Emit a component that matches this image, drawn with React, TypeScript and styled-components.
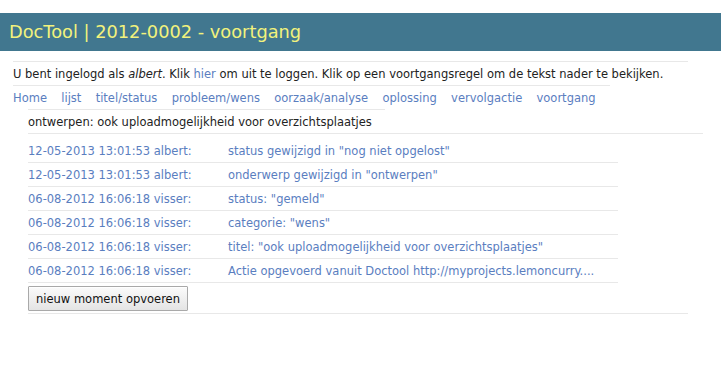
import React from "react";
import styled, { createGlobalStyle } from "styled-components";

const Global = createGlobalStyle`
  html, body { margin: 0; padding: 0; background: #fff; }
  body { font-family: "DejaVu Sans", Verdana, sans-serif; font-size: 11.5px; color: #222; }
`;

const Page = styled.div`
  padding-top: 13px;
`;

const Header = styled.header`
  height: 38px;
  background: #41778f;
  color: #f2f27c;
  font-size: 17.8px;
  line-height: 38px;
  padding-left: 9px;
  white-space: nowrap;
`;

const Content = styled.div`
  margin: 10px 0 0 13px;
  display: flex;
  flex-direction: column;
  align-items: flex-start;
`;

const Rule = styled.div<{ $w: number; $indent?: number }>`
  width: ${(p) => p.$w}px;
  margin-left: ${(p) => p.$indent ?? 0}px;
  height: 0;
  border-top: 1px solid #e8e8e8;
`;

const Info = styled.p`
  margin: 0;
  width: 597px;
  height: 21px;
  padding-top: 2px;
  line-height: 21px;
  border-bottom: 1px solid #e8e8e8;
  white-space: nowrap;
`;

const Link = styled.a`
  color: #5a7ebf;
  text-decoration: none;
  cursor: pointer;
`;

const Nav = styled.nav`
  display: flex;
  gap: 14.3px;
  height: 21px;
  padding-top: 2px;
  line-height: 21px;
  white-space: nowrap;
`;

const Subject = styled.div`
  margin-left: 15px;
  width: 675px;
  height: 21px;
  padding-top: 2px;
  line-height: 21px;
  border-bottom: 1px solid #e8e8e8;
  color: #222;
  white-space: nowrap;
`;

const List = styled.ul`
  list-style: none;
  margin: 5px 0 0 15px;
  padding: 0;
  width: 590px;
`;

const Row = styled.li`
  display: grid;
  grid-template-columns: 200px 1fr;
  height: 21px;
  padding-top: 2px;
  line-height: 21px;
  border-bottom: 1px solid #e8e8e8;
  color: #5a7ebf;
  white-space: nowrap;
  cursor: pointer;
`;

const Button = styled.button`
  margin: 3px 0 0 15px;
  height: 25px;
  padding: 0 7px;
  font-family: "DejaVu Sans", Verdana, sans-serif;
  font-size: 11.5px;
  color: #111;
  background: linear-gradient(#fbfbfb, #e4e4e4);
  border: 1px solid #a9a9a9;
  border-radius: 1px;
  box-shadow: inset 0 1px 0 #fff;
`;

const navItems = [
  "Home",
  "lijst",
  "titel/status",
  "probleem/wens",
  "oorzaak/analyse",
  "oplossing",
  "vervolgactie",
  "voortgang",
];

const rows: [string, string][] = [
  ["12-05-2013 13:01:53 albert:", 'status gewijzigd in "nog niet opgelost"'],
  ["12-05-2013 13:01:53 albert:", 'onderwerp gewijzigd in "ontwerpen"'],
  ["06-08-2012 16:06:18 visser:", 'status: "gemeld"'],
  ["06-08-2012 16:06:18 visser:", 'categorie: "wens"'],
  ["06-08-2012 16:06:18 visser:", 'titel: "ook uploadmogelijkheid voor overzichtsplaatjes"'],
  ["06-08-2012 16:06:18 visser:", "Actie opgevoerd vanuit Doctool http://myprojects.lemoncurry...."],
];

export default function App() {
  return (
    <Page>
      <Global />
      <Header>DocTool | 2012-0002 - voortgang</Header>
      <Content>
        <Rule $w={675} />
        <Info>
          U bent ingelogd als <i>albert</i>. Klik <Link>hier</Link> om uit te loggen. Klik op een
          voortgangsregel om de tekst nader te bekijken.
        </Info>
        <Nav>
          {navItems.map((n) => (
            <Link key={n}>{n}</Link>
          ))}
        </Nav>
        <Rule $w={357} $indent={15} />
        <Subject>ontwerpen: ook uploadmogelijkheid voor overzichtsplaatjes</Subject>
        <List>
          {rows.map(([a, b], i) => (
            <Row key={i}>
              <span>{a}</span>
              <span>{b}</span>
            </Row>
          ))}
        </List>
        <Button>nieuw moment opvoeren</Button>
        <Rule $w={660} $indent={15} style={{ marginTop: 2 }} />
      </Content>
    </Page>
  );
}
